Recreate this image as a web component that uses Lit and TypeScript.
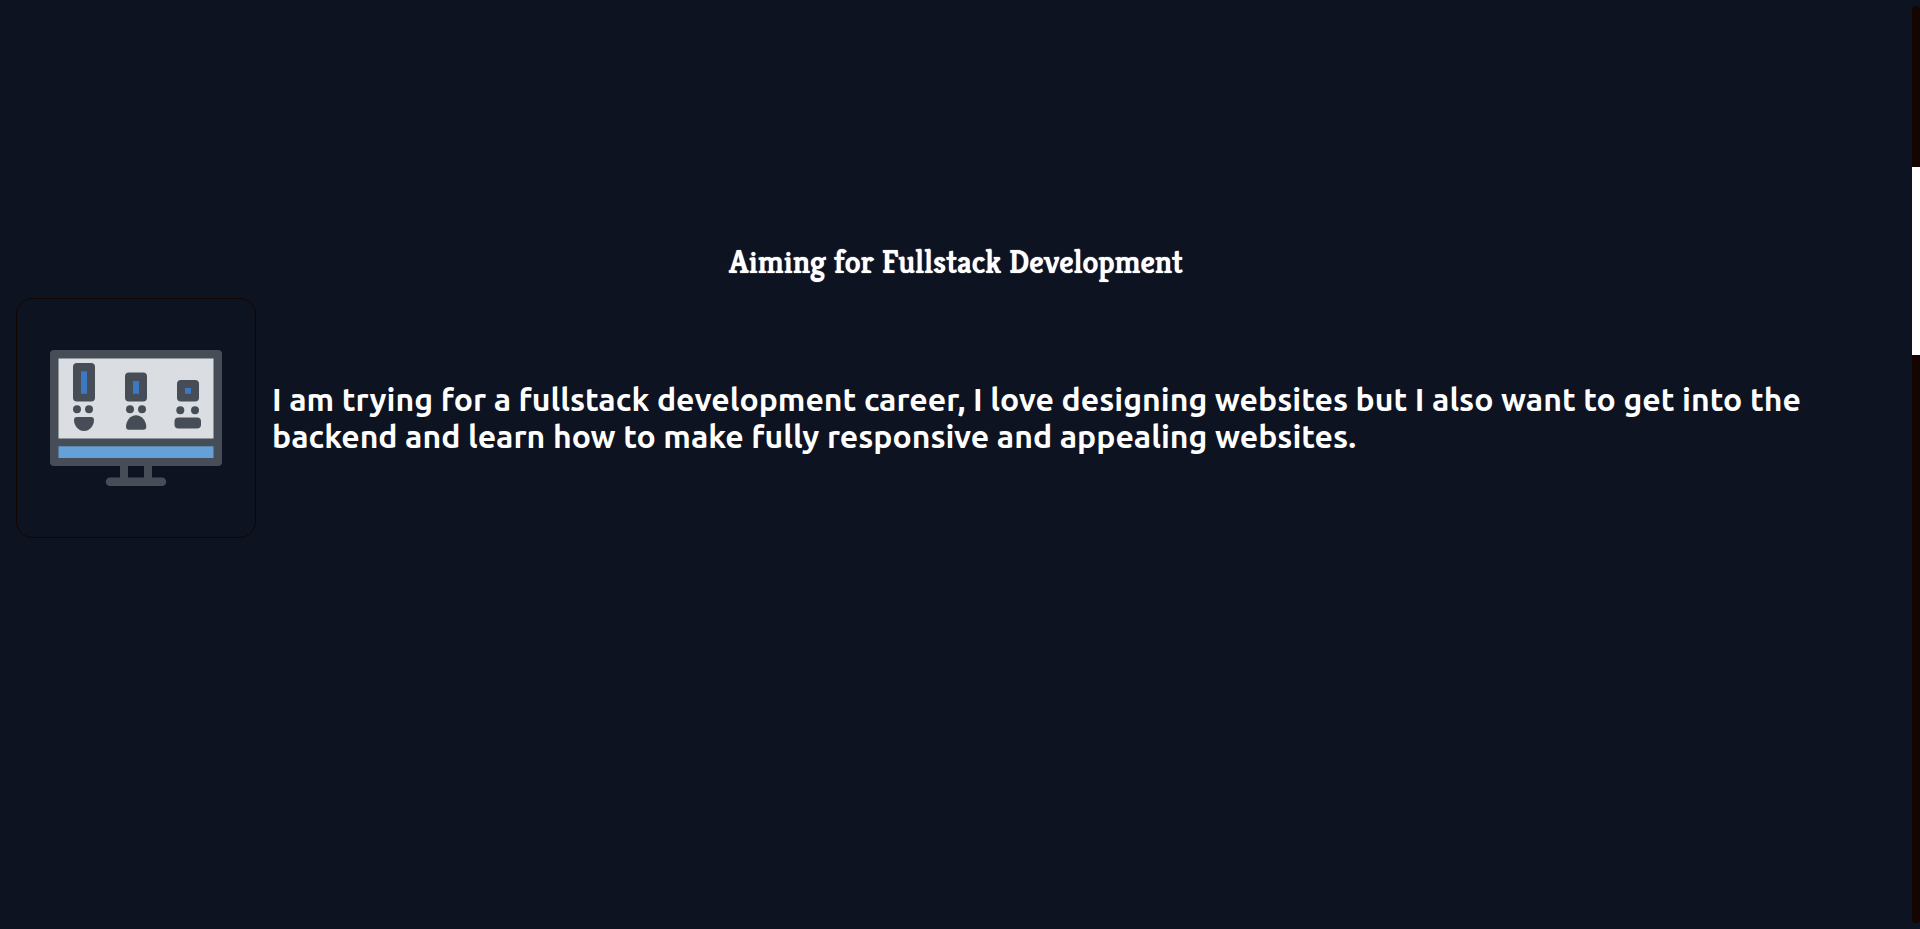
import { LitElement, html, css, svg } from "lit";
import { customElement } from "lit/decorators.js";

@customElement("app-root")
export class AppRoot extends LitElement {
  static styles = css`
    :host {
      display: flex;
      height: 100vh;
      background: #0d1320;
      color: #fff;
    }
    .content {
      flex: 1;
      min-width: 0;
      padding: 242px 16px 0;
    }
    .title {
      margin: 0;
      font: 600 32px/40px Kreon, "Liberation Serif", serif;
      text-shadow: 0 0 1px currentColor;
      text-align: center;
    }
    .row {
      display: flex;
      align-items: center;
      gap: 16px;
      margin-top: 16px;
    }
    .card {
      flex: none;
      box-sizing: border-box;
      width: 240px;
      height: 240px;
      border: 1px solid #140501;
      border-radius: 16px;
    }
    .art {
      display: block;
      width: 100%;
      height: 100%;
    }
    .text {
      margin: 0;
      font: 600 32px/37px Ubuntu, "Noto Sans", sans-serif;
    }
    .track {
      flex: none;
      width: 8px;
      margin: 6px 0;
      padding-top: 161px;
      box-sizing: border-box;
      background: #140501;
      border-radius: 4px;
    }
    .thumb {
      height: 188px;
      background: #fff;
    }
  `;

  private art() {
    return svg`<svg class="art" viewBox="17 299 238 238" aria-hidden="true">
      <rect x="50" y="350" width="172" height="116" rx="4" fill="#464d56"/>
      <rect x="58.5" y="358.5" width="155" height="80" fill="#dadde2"/>
      <rect x="58.5" y="446.3" width="155" height="11.7" fill="#65a1d9"/>
      <g fill="#464d56">
        <path d="M120 465h8v12.5h16V465h8v12.5h10a4.2 4.2 0 0 1 0 8.500h-52a4.200 4.200 0 0 1 0-8.500h10z"/>
        <rect x="73" y="363" width="22" height="38.500" rx="4"/>
        <rect x="125" y="372.500" width="22" height="29" rx="4"/>
        <rect x="177" y="380" width="22" height="21.500" rx="4"/>
        <circle cx="77" cy="409.300" r="4"/>
        <circle cx="89" cy="409.300" r="4"/>
        <circle cx="130" cy="409.300" r="4"/>
        <circle cx="142" cy="409.300" r="4"/>
        <circle cx="180.300" cy="410.300" r="4"/>
        <circle cx="195" cy="410.300" r="4"/>
        <path d="M77 417h14q3 0 3 3c0 6-4.500 11-10 11s-10-5-10-11q0-3 3-3z"/>
        <path d="M129 429.700q-3 0-3-3c0-6 4.500-11.500 10-11.500s10.300 5.500 10.300 11.500q0 3-3 3z"/>
        <rect x="174.500" y="417.500" width="26.500" height="11" rx="4"/>
      </g>
      <g fill="#3d78c3">
        <rect x="81" y="371.300" width="6" height="22.500"/>
        <rect x="133" y="381" width="6" height="12.800"/>
        <rect x="185" y="388" width="6" height="5.800"/>
      </g>
    </svg>`;
  }

  render() {
    return html`
      <main class="content">
        <h1 class="title">Aiming for Fullstack Development</h1>
        <div class="row">
          <div class="card">${this.art()}</div>
          <p class="text">
            I am trying for a fullstack development career, I love designing
            websites but I also want to get into the backend and learn how to
            make fully responsive and appealing websites.
          </p>
        </div>
      </main>
      <div class="track"><div class="thumb"></div></div>
    `;
  }
}
